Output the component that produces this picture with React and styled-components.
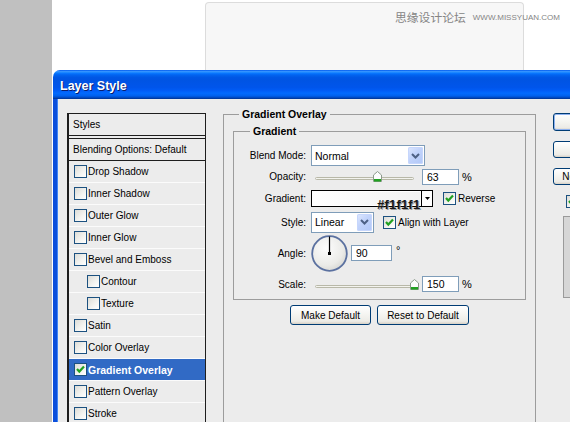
import styled, { createGlobalStyle } from "styled-components";

const GlobalStyle = createGlobalStyle`
  html, body {
    margin: 0;
    padding: 0;
    background: #fff;
  }
  body {
    overflow: hidden;
    font-family: "Liberation Sans", Arial, sans-serif;
  }
`;

const styleItems = [
  { label: "Drop Shadow" },
  { label: "Inner Shadow" },
  { label: "Outer Glow" },
  { label: "Inner Glow" },
  { label: "Bevel and Emboss" },
  { label: "Contour", indent: true },
  { label: "Texture", indent: true },
  { label: "Satin" },
  { label: "Color Overlay" },
  { label: "Gradient Overlay", checked: true, active: true },
  { label: "Pattern Overlay" },
  { label: "Stroke" },
];

const Checkbox = ({ checked }) => (
  <CheckBox>
    {checked && (
      <svg width="11" height="11" viewBox="0 0 11 11">
        <polyline points="2,5 4.3,7.6 9,2.6" fill="none" stroke="#21a121" strokeWidth="2.2" />
      </svg>
    )}
  </CheckBox>
);

const Chevron = () => (
  <svg width="9" height="6" viewBox="0 0 9 6">
    <path d="M1 1 L4.5 4.5 L8 1" fill="none" stroke="#4d6185" strokeWidth="2" />
  </svg>
);

const Select = ({ value, width }) => (
  <SelectBox $w={width}>
    <SelectText>{value}</SelectText>
    <DropButton>
      <Chevron />
    </DropButton>
  </SelectBox>
);

const Slider = ({ value, min, max }) => (
  <SliderBox>
    <Track />
    <Thumb style={{ left: `${4 + ((value - min) / (max - min)) * 99 - 4.5}px` }}>
      <svg width="9" height="11" viewBox="0 0 9 11">
        <path d="M0.5 4 L4.5 0.5 L8.5 4 V10.5 H0.5 Z" fill="#fdfdfd" stroke="#8c9a8c" />
        <rect x="1" y="8" width="7" height="2.5" fill="#21a121" />
      </svg>
    </Thumb>
  </SliderBox>
);

const Dial = () => (
  <svg width="37" height="37" viewBox="0 0 37 37">
    <defs>
      <radialGradient id="dialFill" cx="40%" cy="35%" r="70%">
        <stop offset="0%" stopColor="#fdfdfd" />
        <stop offset="70%" stopColor="#ebebe8" />
        <stop offset="100%" stopColor="#d6d6d2" />
      </radialGradient>
    </defs>
    <circle cx="18.5" cy="18.5" r="17.3" fill="url(#dialFill)" stroke="#5b71a0" strokeWidth="1.8" />
    <line x1="18.5" y1="1.5" x2="18.5" y2="18.5" stroke="#000" strokeWidth="1.2" />
    <rect x="17" y="17" width="3" height="3" fill="#000" />
  </svg>
);

const App = () => {
  return (
    <>
      <GlobalStyle />
      <Page>
        <Strip />
        <Main>
          <TopArea>
            <GhostBox />
            <Watermark>
              <WatermarkCn>思缘设计论坛</WatermarkCn>
              <WatermarkEn>WWW.MISSYUAN.COM</WatermarkEn>
            </Watermark>
          </TopArea>
          <Dialog>
            <TitleBar>Layer Style</TitleBar>
            <DialogBody>
              <StylesPanel>
                <StylesHead>Styles</StylesHead>
                <BlendHead>Blending Options: Default</BlendHead>
                {styleItems.map((item) => (
                  <StyleRow key={item.label} $indent={item.indent} $active={item.active}>
                    <Checkbox checked={item.checked} />
                    <span>{item.label}</span>
                  </StyleRow>
                ))}
              </StylesPanel>

              <OuterGroup>
                <OuterLegend>Gradient Overlay</OuterLegend>
                <InnerGroup>
                  <InnerLegend>Gradient</InnerLegend>

                  <FormRow $h={21}>
                    <FieldLabel>Blend Mode:</FieldLabel>
                    <Select value="Normal" width={114} />
                  </FormRow>

                  <FormRow $h={21}>
                    <FieldLabel>Opacity:</FieldLabel>
                    <Slider value={63} min={0} max={100} />
                    <NumberInput $w={37}>63</NumberInput>
                    <Unit>%</Unit>
                  </FormRow>

                  <FormRow $h={22}>
                    <FieldLabel>Gradient:</FieldLabel>
                    <GradientBox>
                      <GradientSwatch />
                      <GradientArrow>
                        <svg width="5" height="3" viewBox="0 0 5 3">
                          <path d="M0 0 H5 L2.5 3 Z" fill="#000" />
                        </svg>
                      </GradientArrow>
                      <ColorNote>#f1f1f1</ColorNote>
                    </GradientBox>
                    <CheckLabel $ml={10}>
                      <Checkbox checked />
                      <span>Reverse</span>
                    </CheckLabel>
                  </FormRow>

                  <FormRow $h={26}>
                    <FieldLabel>Style:</FieldLabel>
                    <Select value="Linear" width={63} />
                    <CheckLabel $ml={9}>
                      <Checkbox checked />
                      <span>Align with Layer</span>
                    </CheckLabel>
                  </FormRow>

                  <FormRow $h={36}>
                    <FieldLabel>Angle:</FieldLabel>
                    <Dial />
                    <NumberInput $w={41} $ml={3}>90</NumberInput>
                    <Degree>°</Degree>
                  </FormRow>

                  <FormRow $h={26}>
                    <FieldLabel>Scale:</FieldLabel>
                    <Slider value={150} min={10} max={150} />
                    <NumberInput $w={37}>150</NumberInput>
                    <Unit>%</Unit>
                  </FormRow>
                </InnerGroup>

                <ButtonRow>
                  <Button $w={81}>Make Default</Button>
                  <Button $w={92}>Reset to Default</Button>
                </ButtonRow>
              </OuterGroup>

              <SideColumn>
                <Button $w={72} $h={18} $default>OK</Button>
                <Button $w={72} $h={17}>Cancel</Button>
                <Button $w={72} $h={17}>New Style...</Button>
                <PreviewCheck>
                  <Checkbox checked />
                  <span>Preview</span>
                </PreviewCheck>
                <PreviewBox />
              </SideColumn>
            </DialogBody>
          </Dialog>
        </Main>
      </Page>
    </>
  );
};

export default App;

/* ---------- page ---------- */

const Page = styled.div`
  display: flex;
  width: 570px;
  height: 422px;
  overflow: hidden;
  background: #fff;
`;

const Strip = styled.div`
  flex: none;
  width: 52px;
  background: #c0c0c0;
`;

const Main = styled.div`
  flex: 1;
  min-width: 0;
  display: flex;
  flex-direction: column;
  overflow: hidden;
`;

const TopArea = styled.div`
  position: relative;
  flex: none;
  height: 70px;
  padding: 2px 0 0 153px;
  box-sizing: border-box;
`;

const GhostBox = styled.div`
  width: 319px;
  height: 68px;
  box-sizing: border-box;
  border: 1px solid #dcdcdc;
  border-bottom: none;
  border-radius: 4px 4px 0 0;
  background: #f7f7f7;
`;

const Watermark = styled.div`
  position: absolute;
  top: 8px;
  left: 343px;
  display: flex;
  align-items: center;
  gap: 7px;
  white-space: nowrap;
  color: #858585;
`;

const WatermarkCn = styled.span`
  font-family: "Noto Sans CJK SC", sans-serif;
  font-size: 11.8px;
  line-height: 13px;
`;

const WatermarkEn = styled.span`
  font-family: "Liberation Sans", Arial, sans-serif;
  font-size: 8px;
  line-height: 13px;
  padding-top: 3px;
`;

/* ---------- dialog ---------- */

const Dialog = styled.div`
  flex: 1;
  display: flex;
  flex-direction: column;
  margin-left: 1px;
  width: 640px;
`;

const TitleBar = styled.div`
  flex: none;
  height: 29px;
  box-sizing: border-box;
  padding: 9px 0 0 7px;
  border-radius: 7px 0 0 0;
  background: linear-gradient(
    to bottom,
    #0058ee 0%,
    #3593ff 5%,
    #1a86ff 9%,
    #036ffc 13%,
    #0262ee 18%,
    #0057e5 26%,
    #0054e3 34%,
    #0055eb 60%,
    #005bf5 70%,
    #026afe 80%,
    #0062ef 88%,
    #0052d6 93%,
    #0040ab 97%,
    #003092 100%
  );
  color: #fff;
  font-weight: bold;
  font-size: 12.5px;
  line-height: 14px;
  text-shadow: 1px 1px 0 #0a1e6e;
`;

const DialogBody = styled.div`
  flex: 1;
  display: flex;
  align-items: flex-start;
  padding: 9px 0 0 10px;
  background: #ececec;
  border-left: 4px solid #0b4fdc;
  box-shadow: inset 1px 0 0 #3f86f4;
  font-size: 10px;
  color: #000;
`;

/* ---------- styles list ---------- */

const StylesPanel = styled.div`
  flex: none;
  width: 139px;
  height: 340px;
  margin-top: 5px;
  box-sizing: border-box;
  border: 1px solid #1e1e1e;
  border-left-width: 2px;
  background: #ececec;
`;

const StylesHead = styled.div`
  height: 21px;
  line-height: 21px;
  padding-left: 4px;
  border-bottom: 1px solid #1e1e1e;
  margin-bottom: 2px;
`;

const BlendHead = styled.div`
  height: 21px;
  line-height: 21px;
  padding-left: 4px;
  border-top: 1px solid #1e1e1e;
  border-bottom: 1px solid #1e1e1e;
`;

const StyleRow = styled.div`
  display: flex;
  align-items: center;
  gap: 1px;
  height: 21px;
  padding-left: ${({ $indent }) => ($indent ? 18 : 5)}px;
  border-bottom: 1px solid #fbfbfb;
  background: ${({ $active }) => ($active ? "#316ac5" : "transparent")};
  color: ${({ $active }) => ($active ? "#fff" : "#000")};
  font-weight: ${({ $active }) => ($active ? "bold" : "normal")};
  font-size: ${({ $active }) => ($active ? "10.5px" : "10px")};
  white-space: nowrap;
`;

const CheckBox = styled.span`
  flex: none;
  display: inline-flex;
  align-items: center;
  justify-content: center;
  width: 13px;
  height: 13px;
  box-sizing: border-box;
  border: 1px solid #1c5180;
  background: linear-gradient(135deg, #dcdcd7 0%, #f4f4f1 60%, #ffffff 100%);
`;

/* ---------- gradient overlay groups ---------- */

const OuterGroup = styled.fieldset`
  flex: none;
  width: 313px;
  min-height: 330px;
  box-sizing: border-box;
  margin: 0 0 0 17px;
  padding: 4px 9px 0;
  border: 1px solid #9c9c9c;
  border-bottom: none;
`;

const OuterLegend = styled.legend`
  margin-left: 6px;
  padding: 0 3px;
  font-weight: bold;
  font-size: 10.5px;
  line-height: 13px;
`;

const InnerGroup = styled.fieldset`
  margin: 0;
  padding: 7px 0 2px;
  border: 1px solid #9c9c9c;
`;

const InnerLegend = styled.legend`
  margin-left: 16px;
  padding: 0 3px;
  font-weight: bold;
  font-size: 10.5px;
  line-height: 13px;
`;

const FormRow = styled.div`
  display: flex;
  align-items: center;
  height: ${({ $h }) => $h}px;
`;

const FieldLabel = styled.span`
  flex: none;
  width: 72px;
  margin-right: 5px;
  text-align: right;
  white-space: nowrap;
`;

const SelectBox = styled.div`
  flex: none;
  display: flex;
  align-items: center;
  width: ${({ $w }) => $w}px;
  height: 21px;
  box-sizing: border-box;
  border: 1px solid #7f9db9;
  background: #fff;
`;

const SelectText = styled.span`
  flex: 1;
  padding-left: 3px;
  font-size: 10.5px;
`;

const DropButton = styled.span`
  flex: none;
  display: flex;
  align-items: center;
  justify-content: center;
  width: 15px;
  height: 17px;
  margin-right: 1px;
  border-radius: 2px;
  background: linear-gradient(135deg, #dfe8fe 0%, #c1d3fb 45%, #b1c7f7 100%);
  box-shadow: inset 0 0 0 1px #c6d6fc;
`;

const SliderBox = styled.div`
  position: relative;
  flex: none;
  width: 107px;
  height: 17px;
  padding-top: 9px;
  box-sizing: border-box;
`;

const Track = styled.div`
  margin: 0 4px;
  height: 3px;
  box-sizing: border-box;
  border: 1px solid #b8b8a8;
  border-radius: 2px;
  background: #f3f3ee;
`;

const Thumb = styled.span`
  position: absolute;
  top: 3px;
  display: block;
  width: 9px;
  height: 11px;
  line-height: 0;
`;

const NumberInput = styled.div`
  flex: none;
  width: ${({ $w }) => $w}px;
  height: 16px;
  margin-left: ${({ $ml }) => $ml ?? 4}px;
  box-sizing: border-box;
  border: 1px solid #7f9db9;
  background: #fff;
  padding-left: 4px;
  line-height: 14px;
  font-size: 10.5px;
`;

const Unit = styled.span`
  margin-left: 3px;
  font-size: 11px;
`;

const Degree = styled.span`
  align-self: flex-start;
  margin: 9px 0 0 4px;
  font-size: 11px;
`;

const GradientBox = styled.div`
  position: relative;
  flex: none;
  display: flex;
  width: 122px;
  height: 17px;
  box-sizing: border-box;
  border: 1px solid #000;
  background: #fff;
`;

const GradientSwatch = styled.div`
  flex: 1;
  margin: 1px;
  background: linear-gradient(to right, #ffffff 0%, #f1f1f1 100%);
`;

const GradientArrow = styled.div`
  flex: none;
  display: flex;
  align-items: center;
  justify-content: center;
  width: 10px;
  border-left: 1px solid #000;
`;

const ColorNote = styled.span`
  position: absolute;
  left: 65px;
  top: 7px;
  font-weight: bold;
  font-size: 13px;
  line-height: 13px;
  color: #1a1a1a;
  text-shadow: 1px 1px 0 #9a9a9a;
  letter-spacing: 0.2px;
`;

const CheckLabel = styled.label`
  display: flex;
  align-items: center;
  gap: 2px;
  margin-left: ${({ $ml }) => $ml}px;
  white-space: nowrap;
`;

const ButtonRow = styled.div`
  display: flex;
  justify-content: center;
  gap: 6px;
  margin-top: 5px;
`;

const Button = styled.div`
  flex: none;
  display: flex;
  align-items: center;
  justify-content: center;
  width: ${({ $w }) => $w}px;
  height: ${({ $h }) => $h ?? 20}px;
  box-sizing: border-box;
  border: 1px solid #003c74;
  border-radius: 3px;
  background: linear-gradient(to bottom, #ffffff 0%, #f4f4f0 50%, #ecebe6 85%, #d6d0c5 100%);
  box-shadow: ${({ $default }) => ($default ? "inset 0 0 0 1px #8eb1ef" : "none")};
  font-size: 10px;
  white-space: nowrap;
`;

/* ---------- right column ---------- */

const SideColumn = styled.div`
  flex: none;
  display: flex;
  flex-direction: column;
  align-items: flex-start;
  gap: 10px;
  margin: 5px 0 0 17px;
`;

const PreviewCheck = styled.label`
  display: flex;
  align-items: center;
  gap: 2px;
  margin: 0 0 0 13px;
  height: 13px;
`;

const PreviewBox = styled.div`
  width: 60px;
  height: 80px;
  margin: -2px 0 0 10px;
  border: 1px solid #9a9a9a;
  background: #d6d6d6;
`;
